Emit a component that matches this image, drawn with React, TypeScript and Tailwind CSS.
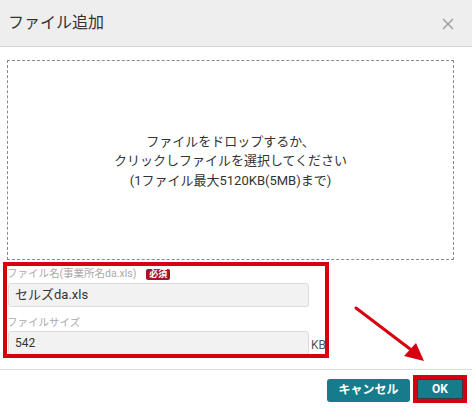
import React from "react";

export default function App() {
  return (
    <div
      className="relative w-[472px] h-[408px] overflow-hidden bg-white text-[#333]"
      style={{ fontFamily: 'Roboto, "Noto Sans CJK JP", sans-serif' }}
    >
      <div className="h-[47px] bg-[#eeeeee] border-b border-[#d6d6d6] flex items-center justify-between pl-[8px] pr-[18px]">
        <div className="text-[16px] text-[#333] leading-none">ファイル追加</div>
        <svg width="12" height="12" viewBox="0 0 12 12" className="mt-[2px]">
          <path d="M1 1 L11 11 M11 1 L1 11" stroke="#9a9a9a" strokeWidth="1.3" fill="none" />
        </svg>
      </div>

      <div className="pl-[7px] pr-[18px] pt-[13px]">
        <div className="h-[200px] border border-dashed border-[#8a8a8a] flex flex-col items-center justify-center text-[13px] leading-[19.5px] text-[#333] pt-[2px]">
          <div>ファイルをドロップするか、</div>
          <div>クリックしファイルを選択してください</div>
          <div>(1ファイル最大5120KB(5MB)まで)</div>
        </div>

        <div className="pt-[6px]">
          <div className="h-[16px] flex items-center gap-[10px]">
            <span className="text-[10.5px] text-[#aaa] leading-none">ファイル名(事業所名da.xls)</span>
            <span className="bg-[#a3132c] text-white text-[9px] font-bold leading-none px-[3px] py-[1px] rounded-[2px]">必須</span>
          </div>
          <div className="mt-[1px] ml-[1px] w-[301px] h-[24px] bg-[#f3f2f2] border border-[#dcdcdc] rounded-[3px] flex items-center pl-[6px] text-[13px] text-[#333]">
            セルズda.xls
          </div>
          <div className="mt-[8px] h-[16px] flex items-center">
            <span className="text-[10.5px] text-[#aaa] leading-none">ファイルサイズ</span>
          </div>
          <div className="flex items-end">
            <div className="ml-[1px] w-[301px] h-[24px] bg-[#f3f2f2] border border-[#dcdcdc] rounded-[3px] flex items-center pl-[6px] text-[12px] text-[#333]">
              542
            </div>
            <span className="ml-[2px] mb-[4px] text-[12px] text-[#555] leading-none">KB</span>
          </div>
        </div>
      </div>

      <div className="mt-[14px] border-t border-[#dcdcdc] h-[39px] flex items-center justify-end pr-[5px] gap-[3px]">
        <button className="w-[83px] h-[23px] bg-[#167c8c] rounded-[3px] text-white text-[12px] font-bold leading-none mt-[2px]">
          キャンセル
        </button>
        <div className="w-[54px] h-[28px] border-[4px] border-[#d7000f] flex">
          <button className="flex-1 bg-[#167c8c] border border-[#3a3a3a] text-white text-[12px] font-bold leading-none">
            OK
          </button>
        </div>
      </div>

      <div className="absolute left-[3px] top-[262px] w-[326px] h-[96px] border-[4px] border-[#d7000f] pointer-events-none" />

      <svg className="absolute left-0 top-0 pointer-events-none" width="472" height="408" viewBox="0 0 472 408">
        <line x1="356" y1="308" x2="414" y2="352" stroke="#d7000f" strokeWidth="3" strokeLinecap="round" />
        <polygon points="424,361 404,356 416,343" fill="#d7000f" />
      </svg>
    </div>
  );
}
